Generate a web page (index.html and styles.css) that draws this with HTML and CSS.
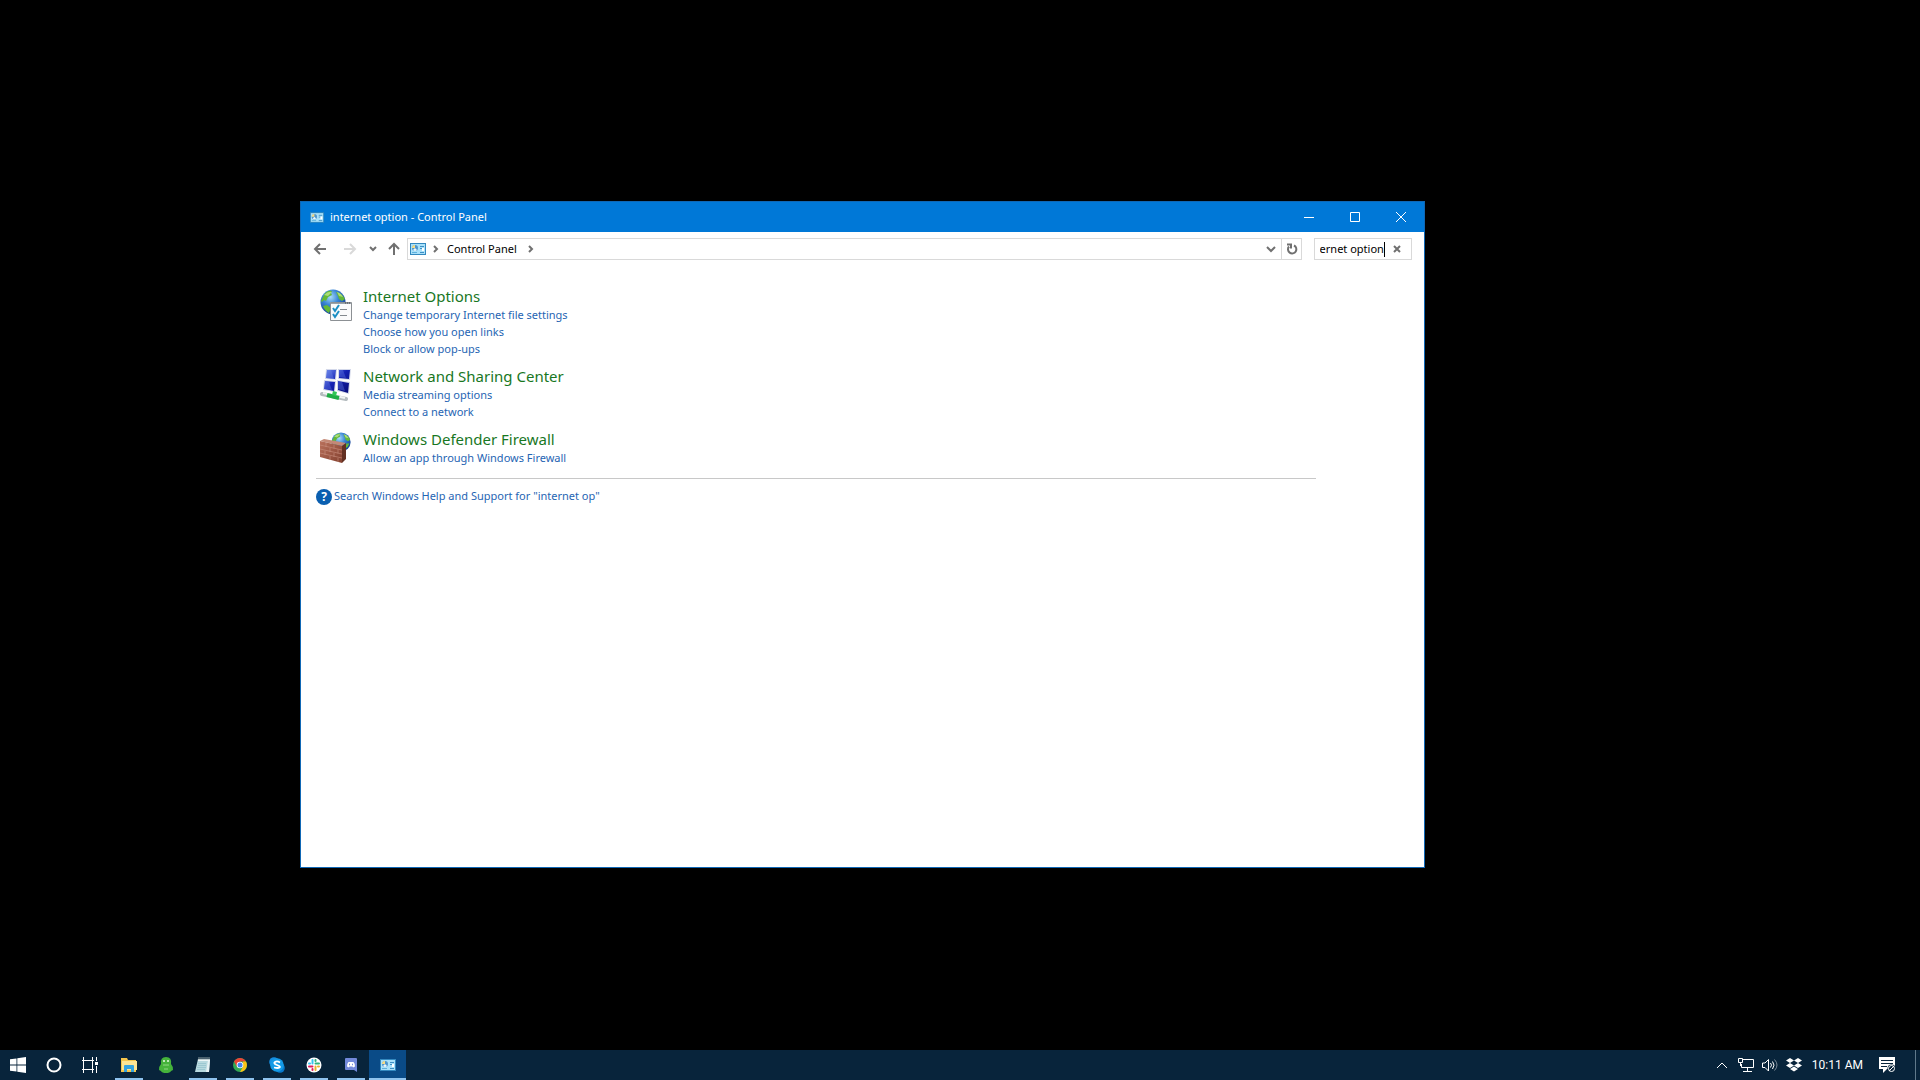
FILE: index.html
```html
<!DOCTYPE html>
<html lang="en">
<head>
<meta charset="utf-8">
<title>internet option - Control Panel</title>
<link rel="stylesheet" href="styles.css">
</head>
<body>
<svg class="sprites" aria-hidden="true">
  <defs>
    <radialGradient id="ocean" cx=".4" cy=".3" r=".7"><stop offset="0" stop-color="#a9dcf8"/><stop offset=".45" stop-color="#3a86d6"/><stop offset="1" stop-color="#123f95"/></radialGradient>
    <linearGradient id="screen" x1="0" y1="0" x2="1" y2="1"><stop offset="0" stop-color="#6f8cf0"/><stop offset=".45" stop-color="#1422b4"/><stop offset="1" stop-color="#070c74"/></linearGradient>
    <linearGradient id="brick" x1="0" y1="0" x2="1" y2="1"><stop offset="0" stop-color="#b9715c"/><stop offset="1" stop-color="#83402f"/></linearGradient>
    <symbol id="globe" viewBox="0 0 26 26">
      <circle cx="13" cy="13" r="12.5" fill="url(#ocean)"/>
      <path d="M4 6Q7 1 12 2L11 4 12 6 8 8 6 12 4 11 2 13 1 12ZM16 3Q22 4 25 10L22 12 19 10 18 7ZM3 17L7 16 11 19 9 24Q5 22 3 17ZM20 15L24 15Q22 20 19 21Z" fill="#64b937"/>
      <path d="M4 6Q8 2 12 3L8 7ZM17 3Q21 4 23 8L19 7Z" fill="#c3e88d" opacity=".75"/>
    </symbol>
    <symbol id="panel" viewBox="0 0 16 12">
      <rect width="16" height="12" fill="#3388bf"/>
      <rect x="1" y="1" width="14" height="10" fill="#a9e1fa"/>
      <circle cx="5" cy="5" r="3" fill="#4f95cc"/><path d="M5 5V2A3 3 0 0 0 2 5Z" fill="#f6dc86"/><path d="M5 5L7 7A3 3 0 0 1 3 7Z" fill="#e9f6fc"/>
      <path d="M10 3.500h4M10 5.500h2M10 9.500h4" fill="none" stroke="#3f8fc4"/><path d="M2 9.500h5" fill="none" stroke="#5fb0dc"/><rect x="12" y="5" width="2" height="3" fill="#fff"/>
    </symbol>
  </defs>
</svg>

<main class="desktop">
  <section class="window" aria-label="Control Panel">
    <header class="titlebar">
      <svg class="title-icon"><use href="#panel"/></svg>
      <h1 class="title">internet option - Control Panel</h1>
      <div class="caption-buttons">
        <button class="caption" aria-label="Minimize"><svg width="10" height="10"><path d="M0 5.5h10"/></svg></button>
        <button class="caption" aria-label="Maximize"><svg width="10" height="10"><path d="M.5.5h9v9h-9z"/></svg></button>
        <button class="caption" aria-label="Close"><svg width="10" height="10"><path d="M0 0l10 10M10 0L0 10"/></svg></button>
      </div>
    </header>

    <nav class="navbar">
      <button class="nav-button" aria-label="Back"><svg width="14" height="12"><path d="M13 6H2M7 1L2 6l5 5"/></svg></button>
      <button class="nav-button nav-faded" aria-label="Forward" disabled><svg width="14" height="12"><path d="M1 6h11M7 1l5 5-5 5"/></svg></button>
      <button class="nav-button nav-recent" aria-label="Recent locations"><svg width="8" height="6"><path d="M1 1l3 3 3-3"/></svg></button>
      <button class="nav-button nav-up" aria-label="Up"><svg width="12" height="14"><path d="M6 13V2M1 7l5-5 5 5"/></svg></button>
      <div class="address">
        <svg class="address-icon"><use href="#panel"/></svg>
        <svg class="crumb-arrow"><path d="M1 1l3 3-3 3"/></svg>
        <a class="crumb" href="#">Control Panel</a>
        <svg class="crumb-arrow"><path d="M1 1l3 3-3 3"/></svg>
        <button class="address-button address-drop" aria-label="Previous locations"><svg width="10" height="7"><path d="M1 1l4 4 4-4"/></svg></button>
        <button class="address-button refresh" aria-label="Refresh"><svg width="12" height="12"><path d="M8 2.500A4.200 4.200 0 1 1 3 3.500"/><path d="M1 1.500h4v4"/></svg></button>
      </div>
      <div class="search">
        <input class="search-input" id="search" type="text" aria-label="Search Control Panel" value="internet option">
        <span class="caret"></span>
        <button class="search-clear" aria-label="Clear"><svg width="8" height="8"><path d="M1 1l6 6M7 1L1 7"/></svg></button>
      </div>
    </nav>

    <div class="content">
      <article class="result">
        <svg class="result-icon" viewBox="0 0 32 32">
          <use href="#globe" width="26" height="26"/>
          <path d="M10.500 13.500h21v18h-21z" fill="#fbfbfb" stroke="#8c9094"/><path d="M11 14.500h20" stroke="#9aa2aa"/><path d="M25 14h1M27 14h1M29 14h1" stroke="#444"/>
          <path d="M20 20.500h7M20 26.500h7" stroke="#84898e"/><path d="M13 19l2 3 4-6M13 25l2 3 4-6" fill="none" stroke="#1d8fc4" stroke-width="2"/>
        </svg>
        <div class="result-text">
          <h2 class="result-title"><a href="#">Internet Options</a></h2>
          <a class="task" href="#">Change temporary Internet file settings</a>
          <a class="task" href="#">Choose how you open links</a>
          <a class="task" href="#">Block or allow pop-ups</a>
        </div>
      </article>
      <article class="result">
        <svg class="result-icon" viewBox="0 0 32 32">
          <path d="M6 0h11l-1 11-11-1zM18 0h13l-1 11-12-1zM4 11l12 1-1 11-12-2zM17 11l13 2-1 12-12-3z" fill="#d3d8ea"/>
          <path d="M7 1h9l-1 9-9-1zM19 1h11l-1 9-10-1zM5 12l10 1-1 9-10-2zM18 12l11 2-1 10-10-3z" fill="url(#screen)"/>
          <path d="M7 1h4l3 9-8-1zM19 1h4l3 8-7-1zM5 12l4 1 3 8-8-1zM18 12l4 1 3 9-7-2z" fill="#6c86e8" opacity=".35"/>
          <path d="M2 25l24 5" stroke="#b5bcbf" stroke-width="4" stroke-linecap="round"/><path d="M3 24l22 5" stroke="#f0f3f3" stroke-width="2"/>
          <path d="M7 26l12 3" stroke="#1fae45" stroke-width="4"/><path d="M13 22l4 1-1 4-4-1z" fill="#32c656"/>
        </svg>
        <div class="result-text">
          <h2 class="result-title"><a href="#">Network and Sharing Center</a></h2>
          <a class="task" href="#">Media streaming options</a>
          <a class="task" href="#">Connect to a network</a>
        </div>
      </article>
      <article class="result">
        <svg class="result-icon" viewBox="0 0 32 32">
          <use href="#globe" x="11" y="0" width="20" height="20"/>
          <path d="M0 9l4-2 22 4-4 3z" fill="#c48976"/><path d="M0 9l22 5v17L0 25z" fill="url(#brick)"/><path d="M22 14l4-3v16l-4 4z" fill="#633022"/>
          <path d="M0 13l22 5M0 17l22 5M0 21l22 5M6 11v4M14 12.500v4M10 16v4M18 17.500v4M5 19v4M14 21v4M10 24v4M18 26v4" stroke="#cb9180" stroke-width=".6"/>
        </svg>
        <div class="result-text">
          <h2 class="result-title"><a href="#">Windows Defender Firewall</a></h2>
          <a class="task" href="#">Allow an app through Windows Firewall</a>
        </div>
      </article>
      <footer class="help">
        <a class="help-link" href="#"><span class="help-icon" aria-hidden="true">?</span><span class="help-text">Search Windows Help and Support for "internet op"</span></a>
      </footer>
    </div>
  </section>
</main>

<footer class="taskbar">
  <div class="shell-buttons">
    <button class="shell-button" aria-label="Start"><svg width="16" height="16" fill="#fff"><path d="M0 2.300L6.500 1.400V7.600H0zM7.300 1.300L16 0v7.600H7.300zM0 8.400h6.500v6.200L0 13.700zM7.300 8.400H16V16l-8.700-1.300z"/></svg></button>
    <button class="shell-button" aria-label="Cortana"><svg width="16" height="16"><circle cx="8" cy="8" r="6.500" fill="none" stroke="#fff" stroke-width="2"/></svg></button>
    <button class="shell-button" aria-label="Task View"><svg width="17" height="16" fill="none" stroke="#fff"><path d="M1.500 0v3.500h9V0M1.500 16v-3.500h9V16M0 3.500h12M0 12.500h12M1.500 3.500v9M10.500 3.500v9M14.500 0v4M14.500 9v7"/><path d="M13 6.500h3" stroke-width="3"/></svg></button>
  </div>
  <div class="app-buttons">
    <button class="app-button running" aria-label="File Explorer"><svg width="16" height="16"><path d="M0 1h6l1 2h8v12H0z" fill="#f5c64d"/><path d="M1 4h15v9H1z" fill="#ffe594"/><path d="M3 15V9q0-1 1-1h8q1 0 1 1v6h-3v-3H6v3z" fill="#35a3df"/></svg></button>
    <button class="app-button" aria-label="Green app"><svg width="16" height="16"><path d="M3 7Q2 0 8 0t5 7q2 2 2 6l-2 1q-1 2-5 2t-5-2l-2-1q0-4 2-6z" fill="#45b33b"/><circle cx="6" cy="4" r="1" fill="#e8f8e4"/><circle cx="10" cy="4" r="1" fill="#e8f8e4"/><path d="M5 8h6M6 12h4" stroke="#8fd983"/></svg></button>
    <button class="app-button running" aria-label="Notepad"><svg width="16" height="16"><path d="M3 2h12l-1 13H0z" fill="#b7d9df"/><path d="M13 3h2l-1 12h-3z" fill="#e6f2f4"/><path d="M3 2h12v2H3z" fill="#edf6f7"/><path d="M4 0v3M6 0v3M8 0v3M10 0v3M12 0v3M14 0v3" stroke="#8a9ba0"/><path d="M3 6.500h8M3 8.500h8M2 10.500h9M2 12.500h8" stroke="#9cc8d1"/></svg></button>
    <button class="app-button running" aria-label="Chrome"><svg width="14" height="14" viewBox="0 0 14 14"><circle cx="7" cy="7" r="7" fill="#34a853"/><path d="M1 3.500A7 7 0 0 1 13 3.500H7L4 8.700z" fill="#ea4335"/><path d="M13 3.500A7 7 0 0 1 7 14l3-5.200V3.500z" fill="#fbc116"/><circle cx="7" cy="7" r="3.300" fill="#fff"/><circle cx="7" cy="7" r="2.500" fill="#4285f4"/></svg></button>
    <button class="app-button running" aria-label="Skype"><svg width="16" height="16"><circle cx="5" cy="5" r="4.800" fill="#168de0"/><circle cx="11" cy="11" r="4.800" fill="#0878ca"/><circle cx="8" cy="8" r="6.800" fill="#139ae6"/><path d="M11 5.500Q8 3.500 6 5T8 8t2.500 2.500T5 10.500" fill="none" stroke="#fff" stroke-width="1.800"/></svg></button>
    <button class="app-button running" aria-label="Slack"><svg width="16" height="16" fill="none" stroke-width="2" stroke-linecap="round"><circle cx="8" cy="8" r="7.500" fill="#fff"/><path d="M6.500 3v3.500M3 6.500h1" stroke="#36c5f0"/><path d="M9.500 6.500H13M9.500 3v1" stroke="#2eb67d"/><path d="M9.500 9.500V13M12 9.500h1" stroke="#ecb22e"/><path d="M6.500 9.500H3M6.500 12v1" stroke="#e01e5a"/></svg></button>
    <button class="app-button running" aria-label="Discord"><svg width="12" height="14"><path d="M1 0h10q1 0 1 1v13l-3-2H1q-1 0-1-1V1q0-1 1-1z" fill="#7289da"/><path d="M2 8.500Q2 5 3.500 4h5Q10 5 10 8.500L8 9.500 7.500 8.500h-3L4 9.500z" fill="#fff"/><path d="M4 6.500h1M7 6.500h1" stroke="#7289da" stroke-width="1.500"/></svg></button>
    <button class="app-button active" aria-label="Control Panel"><svg width="16" height="12"><use href="#panel"/></svg></button>
  </div>
  <div class="tray">
    <button class="tray-button" aria-label="Show hidden icons"><svg width="12" height="8" fill="none" stroke="#fff"><path d="M1 7l5-5 5 5"/></svg></button>
    <button class="tray-button" aria-label="Network"><svg width="16" height="14" fill="none" stroke="#fff"><path d="M5 1.500h10.500v8H3.500V6M9.500 10v3M5 13.500h9M.5.5h4v4h-4zM2.500 5v3"/></svg></button>
    <button class="tray-button" aria-label="Volume"><svg width="16" height="14" fill="none" stroke="#fff"><path d="M.5 5v4.500H3L6.500 13V1.500L3 5zM8.500 5q2 2 0 4.500M10.500 3.500q3 3.500 0 7.500"/><path d="M12.500 1.500q5 5.500 0 11" stroke="#7d8b98"/></svg></button>
    <button class="tray-button" aria-label="Dropbox"><svg width="16" height="14" fill="#fff"><path d="M4 0l4 2.500L4 5 0 2.500zM12 0l4 2.500L12 5 8 2.500zM4 5l4 2.500L4 10 0 7.500zM12 5l4 2.500L12 10 8 7.500zM8 8.500l4 2.500-4 2.500L4 11z"/></svg></button>
    <time class="clock">10:11 AM</time>
    <button class="tray-button" aria-label="Notifications"><svg width="17" height="16"><path d="M0 0h16v12H8l-4 4v-4H0z" fill="#fff"/><path d="M2 3.500h12M2 6.500h12M2 9.500h6" stroke="#08243b"/><circle cx="12.500" cy="11.500" r="4" fill="#08243b"/><circle cx="12.500" cy="11.500" r="3" fill="none" stroke="#fff"/><path d="M10 14l5-5" stroke="#fff"/></svg></button>
    <button class="show-desktop" aria-label="Show desktop"></button>
  </div>
</footer>
<script src="script.js"></script>
</body>
</html>
```
FILE: script.js
```js
// Keep the end of the query in view, as while it is being typed.
const search = document.getElementById("search");
search.focus();
search.setSelectionRange(search.value.length, search.value.length);
search.scrollLeft = search.scrollWidth;
```
FILE: styles.css
```css
* { box-sizing: border-box; }

body {
  margin: 0;
  height: 100vh;
  display: flex;
  flex-direction: column;
  overflow: hidden;
  background: #000;
  color: #000;
  font: 11px/17px "Noto Sans", sans-serif;
}

button {
  display: flex;
  align-items: center;
  justify-content: center;
  padding: 0;
  border: 0;
  background: none;
}

a { color: inherit; text-decoration: none; }
svg { display: block; flex: none; }
.sprites { position: absolute; width: 0; height: 0; }

.desktop { position: relative; flex: 1; }

.window {
  position: absolute;
  left: 300px;
  top: 201px;
  width: 1125px;
  height: 667px;
  display: flex;
  flex-direction: column;
  border: 1px solid #0f67b5;
  background: #fff;
}

.titlebar {
  display: flex;
  align-items: center;
  height: 30px;
  padding-left: 9px;
  gap: 6px;
  background: #0078d7;
  color: #fff;
}
.title-icon { width: 14px; height: 11px; }
.title { flex: 1; margin: 0; padding-bottom: 2px; font-size: 11px; font-weight: 400; }
.caption-buttons { display: flex; align-self: stretch; }
.caption { width: 46px; }
.caption svg { fill: none; stroke: #fff; }

.navbar {
  display: flex;
  align-items: center;
  height: 34px;
  padding: 0 12px 0 11px;
}
.navbar svg { fill: none; stroke: #707070; stroke-width: 2; }
.nav-button { width: 16px; height: 22px; margin-right: 14px; }
.navbar .nav-faded { margin-right: 10px; }
.navbar .nav-faded svg { stroke: #d9d9d9; }
.nav-recent { width: 10px; margin-right: 8px; }
.nav-up { margin-right: 5px; }
.address {
  flex: 1;
  display: flex;
  align-items: center;
  height: 22px;
  padding-left: 2px;
  border: 1px solid #d9d9d9;
}
.address-icon { width: 16px; height: 12px; }
.navbar .address-icon { stroke: none; stroke-width: 1; }
.crumb-arrow { width: 6px; height: 8px; margin: 0 7px; }
.crumb { padding: 0 4px 2px 1px; }
.address-button { width: 20px; height: 20px; }
.address-drop { margin-left: auto; }
.refresh { border-left: 1px solid #d9d9d9; }
.search {
  display: flex;
  align-items: center;
  width: 98px;
  height: 22px;
  margin-left: 12px;
  padding-left: 5px;
  border: 1px solid #d9d9d9;
}
.search-input {
  width: 64px;
  height: 20px;
  padding: 0 0 2px;
  border: 0;
  outline: 0;
  background: none;
  caret-color: transparent;
  font: inherit;
}
.caret { width: 1px; height: 15px; background: #000; }
.search-clear { width: 24px; height: 20px; }

.content {
  display: flex;
  flex-direction: column;
  gap: 9px;
  padding: 20px 0 0 15px;
}
.result { display: flex; gap: 11px; padding-left: 4px; }
.result-icon { width: 32px; height: 32px; margin-top: 3px; }
.result-text { display: flex; flex-direction: column; align-items: flex-start; }
.result-title { margin: 0; font-size: 15px; line-height: 20px; font-weight: 400; color: #19771f; }
.task, .help-link { color: #1f65b3; }
.help {
  margin-top: 3px;
  margin-right: 108px;
  padding-top: 8px;
  border-top: 1px solid #c8c8c8;
}
.help-link { display: flex; align-items: center; gap: 2px; }
.help-text { padding-bottom: 2px; }
.help-icon {
  width: 16px;
  height: 16px;
  border-radius: 50%;
  background: #0a5fb0;
  color: #fff;
  font-size: 12px;
  line-height: 16px;
  font-weight: 700;
  text-align: center;
}

.taskbar {
  display: flex;
  height: 30px;
  background: #08243b;
  color: #fff;
}
.shell-buttons, .app-buttons { display: flex; }
.shell-button { width: 36px; }
.app-buttons { margin-left: 2px; }
.app-button { position: relative; width: 37px; }
.running::after, .active::after {
  content: "";
  position: absolute;
  right: 4px;
  bottom: 0;
  left: 5px;
  height: 2px;
  background: #8fc3ee;
}
.active { background: #0a4b87; }
.active::after { right: 0; left: 0; }
.tray { display: flex; align-items: center; margin-left: auto; }
.tray-button { width: 24px; height: 30px; }
.clock {
  margin: 0 12px 0 6px;
  font: 12px/17px Roboto, sans-serif;
}
.show-desktop {
  width: 5px;
  height: 30px;
  margin-left: 16px;
  border-left: 1px solid #60798b;
}
```
